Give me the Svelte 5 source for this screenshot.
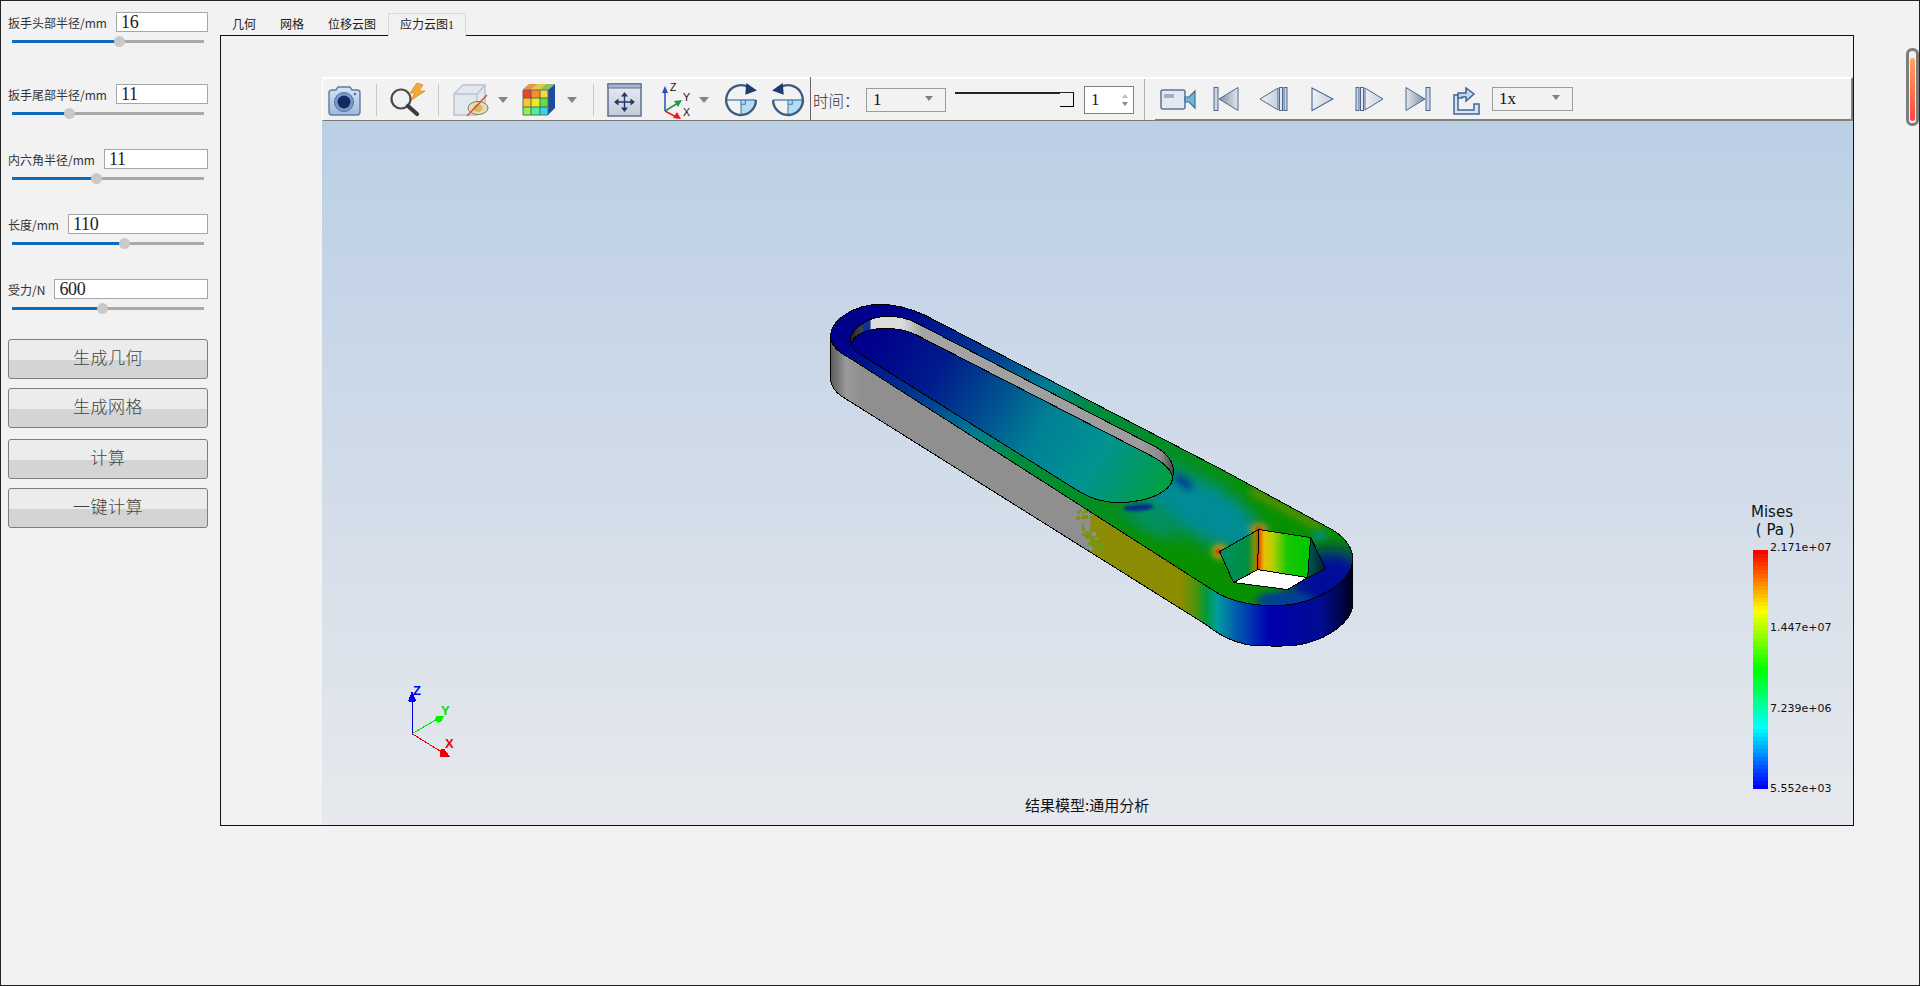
<script>
  const params = [
    { label: "扳手头部半径/mm", value: "16", pct: 55.7 },
    { label: "扳手尾部半径/mm", value: "11", pct: 29.7 },
    { label: "内六角半径/mm", value: "11", pct: 43.8 },
    { label: "长度/mm", value: "110", pct: 58.3 },
    { label: "受力/N", value: "600", pct: 46.9 },
  ];
  const actions = ["生成几何", "生成网格", "计算", "一键计算"];
  const tabs = ["几何", "网格", "位移云图", "应力云图1"];
  const ticks = ["2.171e+07", "1.447e+07", "7.239e+06", "5.552e+03"];
  const bands = Array.from({ length: 60 }, (_, i) => `hsl(${Math.round((i / 59) * 240)}, 100%, 50%)`);

  // speckle where the gray elements meet the coloured ones
  let seed = 7;
  const rnd = () => (seed = (seed * 16807) % 2147483647) / 2147483647;
  const specks = Array.from({ length: 46 }, () => {
    const t = rnd();
    return {
      x: Math.round(1079 + t * 15 + (rnd() - 0.5) * 12),
      y: Math.round(509 + t * 40),
      w: 1 + Math.round(rnd() * 3),
      c: rnd() > 0.55 ? "#6f9a18" : rnd() > 0.5 ? "#8c8c10" : "#8f8f8f",
    };
  });
</script>

<div class="window">
  <aside class="side">
    {#each params as p, i}
      <div class="param" class:first={i === 0}>
        <div class="param-head">
          <span class="param-label">{p.label}</span>
          <input class="param-input" value={p.value} />
        </div>
        <div class="slider">
          <div class="slider-fill" style="width: {p.pct}%"></div>
          <div class="slider-handle" style="left: {p.pct}%"></div>
        </div>
      </div>
    {/each}
    <div class="actions">
      {#each actions as a}
        <button class="action">{a}</button>
      {/each}
    </div>
  </aside>

  <main class="main">
    <nav class="tabs">
      {#each tabs as t, i}
        <span class="tab" class:active={i === 3}>{t}</span>
      {/each}
    </nav>
    <section class="frame">
      <div class="viewer">
        <div class="toolbar">
          <!-- camera -->
          <svg class="i-camera" width="34" height="32" viewBox="0 0 34 32">
            <defs>
              <linearGradient id="camBody" x1="0" y1="0" x2="0" y2="1">
                <stop offset="0" stop-color="#d7e4f4" /><stop offset="1" stop-color="#9fb9dc" />
              </linearGradient>
            </defs>
            <path d="M2 9 Q2 6 5 6 H9 L11 3 H23 L25 6 H30 Q33 6 33 9 V28 Q33 31 30 31 H5 Q2 31 2 28 Z" fill="url(#camBody)" stroke="#5d7ca6" stroke-width="1.4" />
            <circle cx="17" cy="18" r="9.5" fill="#7d9ccb" stroke="#4d6c9c" />
            <circle cx="17" cy="18" r="6.5" fill="#152a63" />
            <circle cx="28" cy="10" r="1.2" fill="#4d6c9c" />
          </svg>
          <span class="sep s-1"></span>
          <!-- search with flash -->
          <svg class="i-search" width="36" height="34" viewBox="0 0 36 34">
            <path d="M27 0 L20 10 L25 10 L20 18 L35 8 L29 8 L33 2 Z" fill="#f0a93a" stroke="#d98a20" stroke-width="0.8" />
            <circle cx="11" cy="16" r="9.5" fill="#eef2f6" stroke="#4a4a4a" stroke-width="2.2" />
            <path d="M18 23 L27 31" stroke="#3c3c3c" stroke-width="4.2" stroke-linecap="round" />
          </svg>
          <span class="sep s-2"></span>
          <!-- box with crossed eye -->
          <svg class="i-box" width="36" height="34" viewBox="0 0 36 34">
            <path d="M1 11 L10 2 H32 V22 L24 32 H1 Z" fill="#e3e7ee" stroke="#b9c2d0" stroke-width="1.4" />
            <path d="M1 11 H24 V32 M24 11 L32 2" fill="none" stroke="#b9c2d0" stroke-width="1.4" />
            <ellipse cx="25" cy="25" rx="10" ry="6.5" fill="#e9ddb0" stroke="#7b7b6c" />
            <ellipse cx="25" cy="25" rx="4.5" ry="4" fill="#d6b868" />
            <path d="M14 33 L34 12" stroke="#d2552e" stroke-width="1.5" />
          </svg>
          <span class="caret c-1"></span>
          <!-- colour cube -->
          <svg class="i-cube" width="34" height="33" viewBox="0 0 34 33">
            <path d="M1 6 L7 1 H33 L26 7 Z" fill="#8fc060" />
            <path d="M7 1 H15 L9 7 H1 Z" fill="#f09050" />
            <path d="M15 1 H24 L18 7 H9 Z" fill="#e4c84a" />
            <rect x="1" y="7" width="8" height="8" fill="#f0402c" />
            <rect x="9" y="7" width="9" height="8" fill="#fa8c28" />
            <rect x="18" y="7" width="8" height="8" fill="#f6dc30" />
            <rect x="1" y="15" width="8" height="9" fill="#fcc828" />
            <rect x="9" y="15" width="9" height="9" fill="#e4ec30" />
            <rect x="18" y="15" width="8" height="9" fill="#60e048" />
            <rect x="1" y="24" width="8" height="8" fill="#90f050" />
            <rect x="9" y="24" width="9" height="8" fill="#50ec98" />
            <rect x="18" y="24" width="8" height="8" fill="#30d8ec" />
            <path d="M26 7 L33 1 V25 L26 32 Z" fill="#1e4c9c" />
            <path d="M1 15 H26 M1 24 H26 M9 7 V32 M18 7 V32" stroke="#4e5c50" stroke-width="0.9" />
            <path d="M1 7 H26 V32 H1 Z" fill="none" stroke="#5c6a70" />
          </svg>
          <span class="caret c-2"></span>
          <span class="sep s-3"></span>
          <!-- fit to view -->
          <svg class="i-fit" width="35" height="34" viewBox="0 0 35 34">
            <defs>
              <linearGradient id="fitBg" x1="0" y1="0" x2="0" y2="1">
                <stop offset="0" stop-color="#e8ebf1" /><stop offset="1" stop-color="#c4cad7" />
              </linearGradient>
            </defs>
            <rect x="1" y="1" width="33" height="32" fill="url(#fitBg)" stroke="#5a6f96" stroke-width="1.5" />
            <rect x="1" y="1" width="33" height="4" fill="#a9b6cc" stroke="#5a6f96" />
            <path d="M17.5 12 V26 M10.5 19 H24.5" stroke="#1f3a66" stroke-width="1.4" />
            <path d="M17.5 9 L14 13.5 H21 Z M17.5 29 L14 24.5 H21 Z M7 19 L11.5 15.5 V22.5 Z M28 19 L23.5 15.5 V22.5 Z" fill="#1f3a66" />
          </svg>
          <!-- axes -->
          <svg class="i-axes" width="32" height="34" viewBox="0 0 32 34">
            <path d="M3 28 V7" stroke="#2450b8" stroke-width="1.5" />
            <path d="M3 3 L0 10 H6 Z" fill="#2450b8" />
            <path d="M3 28 L16 20" stroke="#1c9a4a" stroke-width="1.5" />
            <path d="M20 17 L12 18 L16 24 Z" fill="#1c9a4a" />
            <path d="M3 28 L16 35" stroke="#e02020" stroke-width="1.5" />
            <path d="M19 36 L11 35 L15 29 Z" fill="#e02020" />
            <text class="axis-letter" x="8" y="8">Z</text>
            <text class="axis-letter" x="21" y="18">Y</text>
            <text class="axis-letter" x="21" y="33">X</text>
          </svg>
          <span class="caret c-3"></span>
          <!-- rotate cw / ccw -->
          <svg class="i-rot1" width="34" height="34" viewBox="0 0 32 32">
            <path d="M16 16 H30 A14 14 0 0 1 16 30 Z" fill="#b5dcf2" />
            <path d="M2 16 H30" stroke="#3f7cb0" stroke-width="1.2" />
            <path d="M16 16 V30" stroke="#3f7cb0" stroke-width="1" />
            <path d="M16 20 H20 V16" fill="none" stroke="#3f7cb0" />
            <path d="M23 4 A14 14 0 1 0 30 16" fill="none" stroke="#3e5b80" stroke-width="2.2" />
            <path d="M21 0 L31 7 L20 11 Z" fill="#1d3c6e" />
          </svg>
          <svg class="i-rot2" width="34" height="34" viewBox="0 0 32 32">
            <path d="M16 16 H30 A14 14 0 0 1 16 30 Z" fill="#b5dcf2" />
            <path d="M2 16 H30" stroke="#3f7cb0" stroke-width="1.2" />
            <path d="M16 16 V30" stroke="#3f7cb0" stroke-width="1" />
            <path d="M16 20 H20 V16" fill="none" stroke="#3f7cb0" />
            <path d="M9 4 A14 14 0 1 1 2 16" fill="none" stroke="#3e5b80" stroke-width="2.2" />
            <path d="M11 0 L1 7 L12 11 Z" fill="#1d3c6e" />
          </svg>
          <span class="sep-dark"></span>
          <span class="time-label">时间：</span>
          <div class="combo time-combo"><span>1</span><i class="combo-caret"></i></div>
          <div class="range"><span class="range-handle"></span></div>
          <div class="spin"><span>1</span><div class="spin-arrows"><i class="up"></i><i class="down"></i></div></div>
          <span class="sep s-4"></span>
          <div class="media">
            <!-- video camera -->
            <svg class="m-video" width="36" height="24" viewBox="0 0 36 24">
              <rect x="1" y="3" width="24" height="19" rx="2" fill="#e4e8f0" stroke="#5d7396" stroke-width="1.5" />
              <rect x="4" y="7" width="10" height="4" fill="#a8b0bc" />
              <path d="M25 10 L29 10 L35 4 V21 L29 15 H25 Z" fill="#6fb6d8" stroke="#3d6f96" stroke-width="1.2" />
            </svg>
            <svg class="m-first" width="26" height="26" viewBox="0 0 26 26">
              <defs>
                <linearGradient id="tDark" x1="0" y1="0" x2="1" y2="0">
                  <stop offset="0" stop-color="#7f8da2" /><stop offset="1" stop-color="#e2e6ee" />
                </linearGradient>
                <linearGradient id="tDarkR" x1="1" y1="0" x2="0" y2="0">
                  <stop offset="0" stop-color="#7f8da2" /><stop offset="1" stop-color="#e2e6ee" />
                </linearGradient>
                <linearGradient id="tLight" x1="0" y1="0" x2="1" y2="0">
                  <stop offset="0" stop-color="#eef1f6" /><stop offset="1" stop-color="#c6cfde" />
                </linearGradient>
              </defs>
              <rect x="1" y="1.5" width="4" height="23" fill="#cdd5e2" stroke="#4d6690" />
              <path d="M6 13 L25 1.5 V24.5 Z" fill="url(#tDark)" stroke="#4d6690" />
            </svg>
            <svg class="m-prev" width="29" height="26" viewBox="0 0 29 26">
              <path d="M1 13 L19 2 V24 Z" fill="url(#tLight)" stroke="#4d6690" />
              <rect x="20.5" y="1.5" width="3" height="23" fill="#e4e8f0" stroke="#4d6690" />
              <rect x="25" y="1.5" width="3" height="23" fill="#cdd5e2" stroke="#4d6690" />
            </svg>
            <svg class="m-play" width="23" height="26" viewBox="0 0 23 26">
              <path d="M1 2 L22 13 L1 24.5 Z" fill="url(#tLight)" stroke="#4d6690" stroke-width="1.1" />
            </svg>
            <svg class="m-next" width="29" height="26" viewBox="0 0 29 26">
              <rect x="1" y="1.5" width="3" height="23" fill="#cdd5e2" stroke="#4d6690" />
              <rect x="5.5" y="1.5" width="3" height="23" fill="#e4e8f0" stroke="#4d6690" />
              <path d="M10 2 L28 13 L10 24 Z" fill="url(#tLight)" stroke="#4d6690" />
            </svg>
            <svg class="m-last" width="26" height="26" viewBox="0 0 26 26">
              <path d="M1 1.5 L20 13 L1 24.5 Z" fill="url(#tDarkR)" stroke="#4d6690" />
              <rect x="21" y="1.5" width="4" height="23" fill="#cdd5e2" stroke="#4d6690" />
            </svg>
            <svg class="m-export" width="29" height="31" viewBox="0 0 29 31">
              <path d="M2 11 H6 V26 H22 V20 H27 V30 H2 Z" fill="#d8e4f2" stroke="#3e6596" stroke-width="1.5" />
              <path d="M6 14 V9 H14 V4 L22 10 L14 17 V13 H10 V14 Z" fill="#c2d8ee" stroke="#3e6596" stroke-width="1.5" />
            </svg>
            <div class="combo speed-combo"><span>1x</span><i class="combo-caret"></i></div>
          </div>
        </div>

        <div class="canvas">
          <svg class="scene" viewBox="322 121 1530 703" shape-rendering="crispEdges">
            <defs>
              <linearGradient id="rim" gradientUnits="userSpaceOnUse" x1="880" y1="320" x2="1072" y2="619">
                <stop offset="0" stop-color="#00008c" />
                <stop offset="0.25" stop-color="#003c90" />
                <stop offset="0.42" stop-color="#008090" />
                <stop offset="0.52" stop-color="#008c40" />
                <stop offset="1" stop-color="#089000" />
              </linearGradient>
              <linearGradient id="floor" gradientUnits="userSpaceOnUse" x1="880" y1="330" x2="1155" y2="500">
                <stop offset="0" stop-color="#00008c" />
                <stop offset="0.22" stop-color="#001c8c" />
                <stop offset="0.43" stop-color="#005490" />
                <stop offset="0.58" stop-color="#008096" />
                <stop offset="0.78" stop-color="#009490" />
                <stop offset="0.92" stop-color="#009a60" />
                <stop offset="1" stop-color="#00a040" />
              </linearGradient>
              <linearGradient id="wall" gradientUnits="userSpaceOnUse" x1="850" y1="0" x2="1174" y2="0">
                <stop offset="0" stop-color="#222" />
                <stop offset="0.035" stop-color="#444" />
                <stop offset="0.04" stop-color="#1030a0" />
                <stop offset="0.06" stop-color="#1030a0" />
                <stop offset="0.065" stop-color="#dcdcdc" />
                <stop offset="0.16" stop-color="#dcdcdc" />
                <stop offset="0.22" stop-color="#a4a4a4" />
                <stop offset="0.9" stop-color="#9c9c9c" />
                <stop offset="0.96" stop-color="#8a8a8a" />
                <stop offset="1" stop-color="#3c3c3c" />
              </linearGradient>
              <linearGradient id="front" gradientUnits="userSpaceOnUse" x1="830" y1="0" x2="1352" y2="0">
                <stop offset="0" stop-color="#5a5a5a" />
                <stop offset="0.015" stop-color="#777" />
                <stop offset="0.03" stop-color="#9a9a9a" />
                <stop offset="0.06" stop-color="#8f8f8f" />
                <stop offset="0.495" stop-color="#8f8f8f" />
                <stop offset="0.5" stop-color="#8c8c08" />
                <stop offset="0.67" stop-color="#8c8c00" />
                <stop offset="0.7" stop-color="#4c920c" />
                <stop offset="0.72" stop-color="#009a40" />
                <stop offset="0.74" stop-color="#009c9c" />
                <stop offset="0.785" stop-color="#0050b0" />
                <stop offset="0.84" stop-color="#0000b0" />
                <stop offset="0.94" stop-color="#000c90" />
                <stop offset="1" stop-color="#000020" />
              </linearGradient>
              <linearGradient id="hexLeft" gradientUnits="userSpaceOnUse" x1="1222" y1="0" x2="1258" y2="0">
                <stop offset="0" stop-color="#008f60" />
                <stop offset="0.7" stop-color="#008f40" />
                <stop offset="0.9" stop-color="#8a9000" />
                <stop offset="1" stop-color="#d04000" />
              </linearGradient>
              <linearGradient id="hexBack" gradientUnits="userSpaceOnUse" x1="1257" y1="0" x2="1310" y2="0">
                <stop offset="0" stop-color="#e03000" />
                <stop offset="0.12" stop-color="#e8c000" />
                <stop offset="0.3" stop-color="#b0d000" />
                <stop offset="0.55" stop-color="#18c800" />
                <stop offset="1" stop-color="#00c800" />
              </linearGradient>
              <linearGradient id="hexRight" gradientUnits="userSpaceOnUse" x1="1307" y1="0" x2="1326" y2="0">
                <stop offset="0" stop-color="#005a50" />
                <stop offset="1" stop-color="#00182c" />
              </linearGradient>
              <filter id="soft" x="-60%" y="-60%" width="220%" height="220%">
                <feGaussianBlur stdDeviation="9" />
              </filter>
              <filter id="softSmall" x="-80%" y="-80%" width="260%" height="260%">
                <feGaussianBlur stdDeviation="3.5" />
              </filter>
              <filter id="softTiny" x="-80%" y="-80%" width="260%" height="260%">
                <feGaussianBlur stdDeviation="1.6" />
              </filter>
              <clipPath id="topClip">
                <path d="M830 335 C832 318 855 304 880 304 C897 304 912 309 925 315 L1223 470 L1333 530 C1345 538 1352 548 1352 558 C1352 585 1310 605 1273 605 C1250 605 1228 600 1213 590 L850 358 C838 352 830 345 830 335 Z" />
              </clipPath>
            </defs>

            <!-- side of the wrench -->
            <path d="M830 335 V380 C832 387 836 392 840 395 L1207 625 C1220 636 1240 645 1257 645 C1280 646 1300 645 1307 642 C1325 638 1352 622 1352 603 V558 Z" fill="url(#front)" stroke="#000" stroke-width="1" />
            {#each specks as s}
              <rect x={s.x} y={s.y} width={s.w} height={s.w} fill={s.c} />
            {/each}

            <!-- top face -->
            <path d="M830 335 C832 318 855 304 880 304 C897 304 912 309 925 315 L1223 470 L1333 530 C1345 538 1352 548 1352 558 C1352 585 1310 605 1273 605 C1250 605 1228 600 1213 590 L850 358 C838 352 830 345 830 335 Z" fill="url(#rim)" />
            <g clip-path="url(#topClip)" shape-rendering="auto">
              <ellipse cx="1198" cy="508" rx="78" ry="26" transform="rotate(31 1198 508)" fill="#008c96" filter="url(#soft)" />
              <ellipse cx="1215" cy="512" rx="36" ry="16" transform="rotate(31 1215 512)" fill="#008c96" filter="url(#soft)" />
              <ellipse cx="1150" cy="520" rx="30" ry="7" transform="rotate(30 1150 520)" fill="#00909a" filter="url(#soft)" />
              <path d="M1250 490 L1320 527" stroke="#6c9000" stroke-width="6" filter="url(#softSmall)" />
              <ellipse cx="1330" cy="585" rx="42" ry="36" fill="#000c9a" filter="url(#soft)" />
              <ellipse cx="1285" cy="600" rx="30" ry="9" fill="#003c98" filter="url(#softSmall)" />
              <ellipse cx="1319" cy="535" rx="8" ry="4" fill="#008c96" filter="url(#softSmall)" />
              <path d="M1176 476 L1190 487" stroke="#001a96" stroke-width="7" opacity="0.85" filter="url(#softSmall)" />
              <ellipse cx="1138" cy="507" rx="15" ry="3.5" transform="rotate(-4 1138 507)" fill="#001a96" opacity="0.85" filter="url(#softTiny)" />
              <ellipse cx="1219" cy="551" rx="7" ry="7" fill="#e8a000" filter="url(#softSmall)" />
              <ellipse cx="1258" cy="529" rx="9" ry="5" fill="#e89000" filter="url(#softSmall)" />
              <ellipse cx="1218" cy="551" rx="2.5" ry="3" fill="#d02000" filter="url(#softTiny)" />
              <ellipse cx="1258" cy="529" rx="3" ry="2.5" fill="#d02000" filter="url(#softTiny)" />
            </g>
            <path d="M830 335 C832 318 855 304 880 304 C897 304 912 309 925 315 L1223 470 L1333 530 C1345 538 1352 548 1352 558 C1352 585 1310 605 1273 605 C1250 605 1228 600 1213 590 L850 358 C838 352 830 345 830 335 Z" fill="none" stroke="#000" stroke-width="1" />

            <!-- pocket -->
            <path d="M850 337 C855 325 870 316 887 316 C897 316 908 318 917 323 L1158 448 C1166 453 1173 462 1173 470 C1173 488 1150 502 1117 502 C1103 502 1088 497 1077 490 L857 352 C852 348 849 342 850 337 Z" fill="url(#wall)" stroke="#000" stroke-width="1" />
            <path d="M851 342 C855 333 870 328 884 328 C897 328 908 330 917 335 L1150 455 C1162 461 1172 470 1172 478 C1171 490 1150 502 1117 502 C1103 502 1088 497 1077 490 L857 352 C853 349 851 346 851 342 Z" fill="url(#floor)" stroke="#000" stroke-width="1" />

            <!-- hexagon socket -->
            <path d="M1233 582 L1257 569 L1307 577 L1287 589 Z" fill="#fff" />
            <path d="M1219 551 L1258 529 L1257 569 L1233 582 Z" fill="url(#hexLeft)" />
            <path d="M1258 529 L1310 537 L1307 577 L1257 569 Z" fill="url(#hexBack)" />
            <path d="M1310 537 L1325 568 L1307 577 Z" fill="url(#hexRight)" />
            <path d="M1233 582 L1219 551 L1258 529 L1310 537 L1325 568 L1307 577 L1287 589 Z M1258 529 L1257 569 M1233 582 L1257 569 L1307 577 M1310 537 L1307 577" fill="none" stroke="#000" stroke-width="1" />

            <!-- triad -->
            <path d="M412 733 V700" stroke="#0000e0" stroke-width="1" />
            <path d="M412 690 L416 700 L415 701 H409 L408 700 Z" fill="#0000f0" />
            <path d="M412 733 L438 718" stroke="#00e000" stroke-width="1" />
            <path d="M436 715 H444 L441 721 L438 722 L435 719 Z" fill="#00f000" />
            <path d="M412 733 L441 751" stroke="#e00000" stroke-width="1" />
            <path d="M440 749 L444 748 L450 756 H440 Z" fill="#f00000" />
            <text class="triad z" x="413" y="694">Z</text>
            <text class="triad y" x="441" y="714">Y</text>
            <text class="triad x" x="445" y="747">X</text>
          </svg>

          <div class="legend">
            <div class="legend-title">Mises<br />&nbsp;( Pa )</div>
            <div class="legend-body">
              <div class="legend-bar">
                {#each bands as c}
                  <span style="background: {c}"></span>
                {/each}
              </div>
              <div class="legend-ticks">
                {#each ticks as t}
                  <span>{t}</span>
                {/each}
              </div>
            </div>
          </div>
          <div class="caption">结果模型:通用分析</div>
        </div>
      </div>
    </section>
  </main>

  <div class="scroll-thumb"><i></i></div>
</div>

<style>
  :global(body) {
    margin: 0;
    background: #f2f2f2;
  }

  .window {
    position: relative;
    display: flex;
    box-sizing: border-box;
    width: 1920px;
    height: 986px;
    border: 1px solid #222;
    background: #f2f2f2;
    font-family: "Noto Sans CJK SC", "Liberation Sans", sans-serif;
    overflow: hidden;
  }

  /* left column */
  .side {
    box-sizing: border-box;
    width: 219px;
    flex: none;
    padding: 11px 12px 0 7px;
  }
  .param {
    height: 36px;
    margin-top: 29px;
  }
  .param.first {
    margin-top: 0;
    margin-bottom: 36px;
  }
  .param-head {
    display: flex;
    align-items: center;
    gap: 9px;
    height: 20px;
  }
  .param-label {
    font-size: 12px;
    color: #333;
    white-space: nowrap;
  }
  .param-input {
    flex: 1;
    min-width: 0;
    box-sizing: border-box;
    height: 20px;
    padding: 0 4px;
    border: 1px solid #a6a6a6;
    border-radius: 0;
    background: #fff;
    outline: none;
    font-family: "Liberation Serif", serif;
    font-size: 18px;
    letter-spacing: -0.3px;
    color: #222;
  }
  .slider {
    position: relative;
    height: 3px;
    margin: 8px 4px 0 4px;
    background: #a9a9a9;
  }
  .slider-fill {
    height: 100%;
    background: #0f6cbd;
  }
  .slider-handle {
    position: absolute;
    top: -4px;
    width: 11px;
    height: 11px;
    margin-left: -5px;
    border-radius: 50%;
    background: #c9c9c9;
  }
  .actions {
    display: grid;
    grid-template-columns: 1fr;
    margin-top: 24px;
  }
  .action {
    height: 40px;
    padding: 0 0 5px;
    border: 1px solid #7e7e7e;
    border-radius: 3px;
    background: linear-gradient(#ececec 0, #ececec 20px, #d4d4d4 20px, #d4d4d4 100%);
    font-family: "Noto Sans CJK SC", sans-serif;
    font-size: 17px;
    font-weight: 300;
    letter-spacing: 0.5px;
    color: #444;
  }
  .action:nth-child(1),
  .action:nth-child(3) {
    margin-bottom: 9px;
  }
  .action:nth-child(2) {
    margin-bottom: 11px;
  }

  /* tabs + frame */
  .main {
    flex: none;
    width: 1634px;
    display: flex;
    flex-direction: column;
  }
  .tabs {
    display: flex;
    height: 34px;
    padding: 12px 0 0 1px;
    box-sizing: border-box;
    position: relative;
    z-index: 1;
  }
  .tab {
    box-sizing: border-box;
    height: 23px;
    line-height: 24px;
    padding: 0 11px;
    margin-right: 2px;
    font-family: "Liberation Serif", "Noto Sans CJK SC", serif;
    font-size: 12px;
    color: #222;
  }
  .tab:nth-child(3) {
    margin-right: 1px;
  }
  .tab.active {
    border: 1px solid #d9d9d9;
    border-bottom: none;
    line-height: 23px;
    background: #f2f2f2;
  }
  .frame {
    box-sizing: border-box;
    height: 791px;
    padding: 41px 0 0 101px;
    border: 1px solid #111;
    background: #f2f2f2;
  }
  .viewer {
    display: flex;
    flex-direction: column;
    height: 100%;
  }

  /* toolbar */
  .toolbar {
    display: flex;
    align-items: center;
    box-sizing: border-box;
    height: 44px;
    flex: none;
    border-top: 2px solid #fff;
    border-left: 1px solid #fff;
    border-bottom: 1px solid #777;
    background: #f2f2f2;
  }
  .sep {
    width: 1px;
    height: 32px;
    flex: none;
    background: #c9c9c9;
  }
  .i-camera { margin-left: 4px; }
  .s-1 { margin-left: 15px; }
  .i-search { margin-left: 13px; }
  .s-2 { margin-left: 12px; }
  .i-box { margin-left: 14px; }
  .caret {
    flex: none;
    width: 0;
    height: 0;
    border-left: 5px solid transparent;
    border-right: 5px solid transparent;
    border-top: 6px solid #858585;
  }
  .c-1 { margin-left: 9px; }
  .i-cube { margin-left: 14px; }
  .c-2 { margin-left: 11px; }
  .s-3 { margin-left: 16px; }
  .i-fit { margin-left: 13px; }
  .i-axes { margin-left: 20px; overflow: visible; }
  .c-3 { margin-left: 5px; }
  .i-rot1 { margin-left: 15px; overflow: visible; flex: none; }
  .i-rot2 { margin-left: 13px; overflow: visible; flex: none; }
  .axis-letter {
    font-family: "Liberation Sans", sans-serif;
    font-size: 10.5px;
    fill: #111;
  }
  .sep-dark {
    flex: none;
    align-self: stretch;
    width: 1px;
    margin-left: 5px;
    margin-top: -2px;
    background: #666;
  }
  .time-label {
    flex: none;
    width: 52px;
    margin-left: 2px;
    font-family: "Noto Sans CJK SC", sans-serif;
    font-size: 15.5px;
    font-weight: 300;
    color: #333;
  }
  .combo {
    flex: none;
    display: flex;
    align-items: center;
    justify-content: space-between;
    box-sizing: border-box;
    height: 24px;
    padding: 0 12px 0 6px;
    border: 1px solid #9c9c9c;
    font-family: "Liberation Serif", serif;
    font-size: 17px;
    color: #111;
  }
  .combo-caret {
    width: 0;
    height: 0;
    margin-bottom: 3px;
    border-left: 4px solid transparent;
    border-right: 4px solid transparent;
    border-top: 5px solid #808080;
  }
  .time-combo { width: 80px; margin-left: 1px; }
  .range {
    flex: none;
    position: relative;
    box-sizing: border-box;
    width: 119px;
    height: 15px;
    margin-left: 9px;
    border-top: 2px solid #222;
  }
  .range-handle {
    position: absolute;
    right: 0;
    top: -1px;
    box-sizing: border-box;
    width: 14px;
    height: 14px;
    border-right: 1px solid #000;
    border-bottom: 1px solid #000;
    background: #f2f2f2;
  }
  .spin {
    flex: none;
    display: flex;
    align-items: center;
    justify-content: space-between;
    box-sizing: border-box;
    width: 50px;
    height: 28px;
    margin-left: 10px;
    padding: 0 5px 0 6px;
    border: 1px solid #808080;
    background: #fff;
    font-family: "Liberation Serif", serif;
    font-size: 17px;
    color: #222;
  }
  .spin-arrows {
    display: flex;
    flex-direction: column;
    gap: 4px;
  }
  .spin-arrows i {
    width: 0;
    height: 0;
    border-left: 3.5px solid transparent;
    border-right: 3.5px solid transparent;
  }
  .spin-arrows .up { border-bottom: 4px solid #bdbdbd; }
  .spin-arrows .down { border-top: 4px solid #8a8a8a; }
  .s-4 {
    align-self: stretch;
    height: auto;
    margin-left: 10px;
    background: #b0b0b0;
  }
  .media {
    flex: 1;
    display: flex;
    align-items: center;
    align-self: stretch;
    margin-left: 10px;
    margin-top: -2px;
    margin-bottom: -1px;
    border-top: 2px solid #fff;
    border-bottom: 2px solid #808080;
    border-right: 2px solid #808080;
  }
  .m-video { margin-left: 5px; }
  .m-first { margin-left: 17px; }
  .m-prev { margin-left: 20px; }
  .m-play { margin-left: 23px; }
  .m-next { margin-left: 21px; }
  .m-last { margin-left: 21px; }
  .m-export { margin-left: 21px; }
  .speed-combo { width: 81px; margin-left: 11px; }

  /* 3D view */
  .canvas {
    position: relative;
    flex: 1;
    background: linear-gradient(#bbcfe5 0%, #e7e9ed 100%);
    overflow: hidden;
  }
  .scene {
    position: absolute;
    inset: 0;
    width: 100%;
    height: 100%;
  }
  .triad {
    font-family: "Liberation Sans", sans-serif;
    font-size: 13px;
    font-weight: 700;
  }
  .triad.z { fill: #0000f0; }
  .triad.y { fill: #00e000; }
  .triad.x { fill: #f00000; }
  .legend {
    position: absolute;
    left: 1429px;
    top: 382px;
    color: #111;
    font-family: "DejaVu Sans", sans-serif;
  }
  .legend-title {
    font-size: 15px;
    line-height: 18px;
  }
  .legend-body {
    display: flex;
    margin-top: 11px;
    margin-left: 2px;
  }
  .legend-bar {
    display: flex;
    flex-direction: column;
    width: 15px;
    height: 239px;
  }
  .legend-bar span {
    flex: 1;
  }
  .legend-ticks {
    display: flex;
    flex-direction: column;
    justify-content: space-between;
    height: 257px;
    margin: -10px 0 0 2px;
    font-size: 11px;
    line-height: 16px;
    white-space: nowrap;
  }
  .caption {
    position: absolute;
    bottom: 10px;
    left: 703px;
    font-size: 15px;
    line-height: 20px;
    color: #111;
    white-space: nowrap;
  }

  .scroll-thumb {
    position: absolute;
    left: 1905px;
    top: 47px;
    box-sizing: border-box;
    width: 13px;
    height: 78px;
    border: 3px solid #7d7d7d;
    border-radius: 6px;
    padding: 7px 1px 2px;
  }
  .scroll-thumb i {
    display: block;
    height: 100%;
    border-radius: 3px;
    background: linear-gradient(#ffa65c, #ff4444);
  }
</style>
